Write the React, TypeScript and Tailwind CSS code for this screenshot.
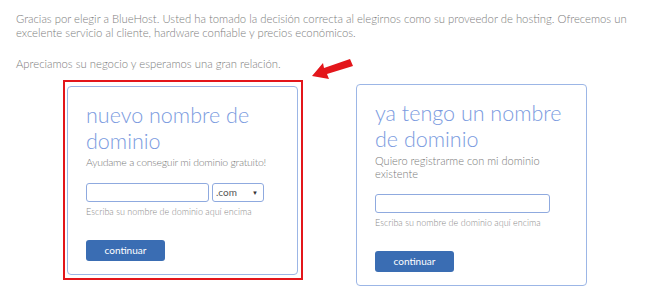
import React from "react";

const font = { fontFamily: "Lato, 'Open Sans', sans-serif" };

function Card({
  title,
  subtitle,
  withSelect,
  subtitleClass,
}: {
  title: string[];
  subtitle: string[];
  withSelect?: boolean;
  subtitleClass: string;
}) {
  return (
    <div className="w-[231px] rounded-[4px] border border-[#9cb6e6] bg-white pl-[18px] pr-2 pt-[15px] pb-[13px]">
      <div className="text-[21.5px] font-light leading-[26px] text-[#7b9be0]">
        {title.map((t) => (
          <div key={t}>{t}</div>
        ))}
      </div>
      <div className={`mt-[2px] font-light leading-[13px] text-[#7a7a7a] ${subtitleClass}`}>
        {subtitle.map((t) => (
          <div key={t}>{t}</div>
        ))}
      </div>
      <div className="mt-[14px] flex gap-[3px]">
        <div
          className={`h-[19px] rounded-[3px] border border-[#8faadf] bg-white ${
            withSelect ? "w-[123px]" : "w-[175px]"
          }`}
        />
        {withSelect && (
          <div className="flex h-[19px] w-[52px] items-center justify-between rounded-[3px] border border-[#8faadf] bg-white pl-[3px] pr-[5px] text-[10px] text-[#555]">
            <span>.com</span>
            <span className="text-[6px] text-[#333]">▼</span>
          </div>
        )}
      </div>
      <div className="mt-[4px] text-[9px] font-light leading-[11px] text-[#8a8a8a]">
        Escriba su nombre de dominio aquí encima
      </div>
      <button className="mt-[23px] flex h-[21px] w-[79px] items-center justify-center rounded-[3px] bg-[#3a6db3] text-[10px] text-white">
        continuar
      </button>
    </div>
  );
}

export default function App() {
  return (
    <div className="relative h-[300px] w-[655px] bg-white" style={font}>
      <div className="px-4 pt-[12px] text-[11.3px] font-light leading-[14px] text-[#7d7d7d]">
        <p>
          Gracias por elegir a BlueHost. Usted ha tomado la decisión correcta al
          elegirnos como su proveedor de hosting. Ofrecemos un excelente servicio
          al cliente, hardware confiable y precios económicos.
        </p>
        <p className="mt-[17px]">
          Apreciamos su negocio y esperamos una gran relación.
        </p>
      </div>
      <div className="mt-[9px] flex items-start pl-[63px]">
        <div className="border-2 border-[#e3161b] pb-[3px] pl-[2px] pr-[3px] pt-[4px]">
          <Card
            title={["nuevo nombre de", "dominio"]}
            subtitle={["Ayudame a conseguir mi dominio gratuito!"]}
            subtitleClass="whitespace-nowrap text-[10.5px] tracking-[-0.25px]"
            withSelect
          />
        </div>
        <div className="ml-[53px] mt-[4px]">
          <Card
            title={["ya tengo un nombre", "de dominio"]}
            subtitle={["Quiero registrarme con mi dominio", "existente"]}
            subtitleClass="text-[11px]"
          />
        </div>
      </div>
      <svg
        className="absolute left-[308px] top-[55px]"
        width="50"
        height="28"
        viewBox="0 0 50 28"
      >
        <path
          d="M4 21 L15 8 L16 13 L42 4 L45 11 L19 19 L21 24 Z"
          fill="#e3161b"
        />
      </svg>
    </div>
  );
}
